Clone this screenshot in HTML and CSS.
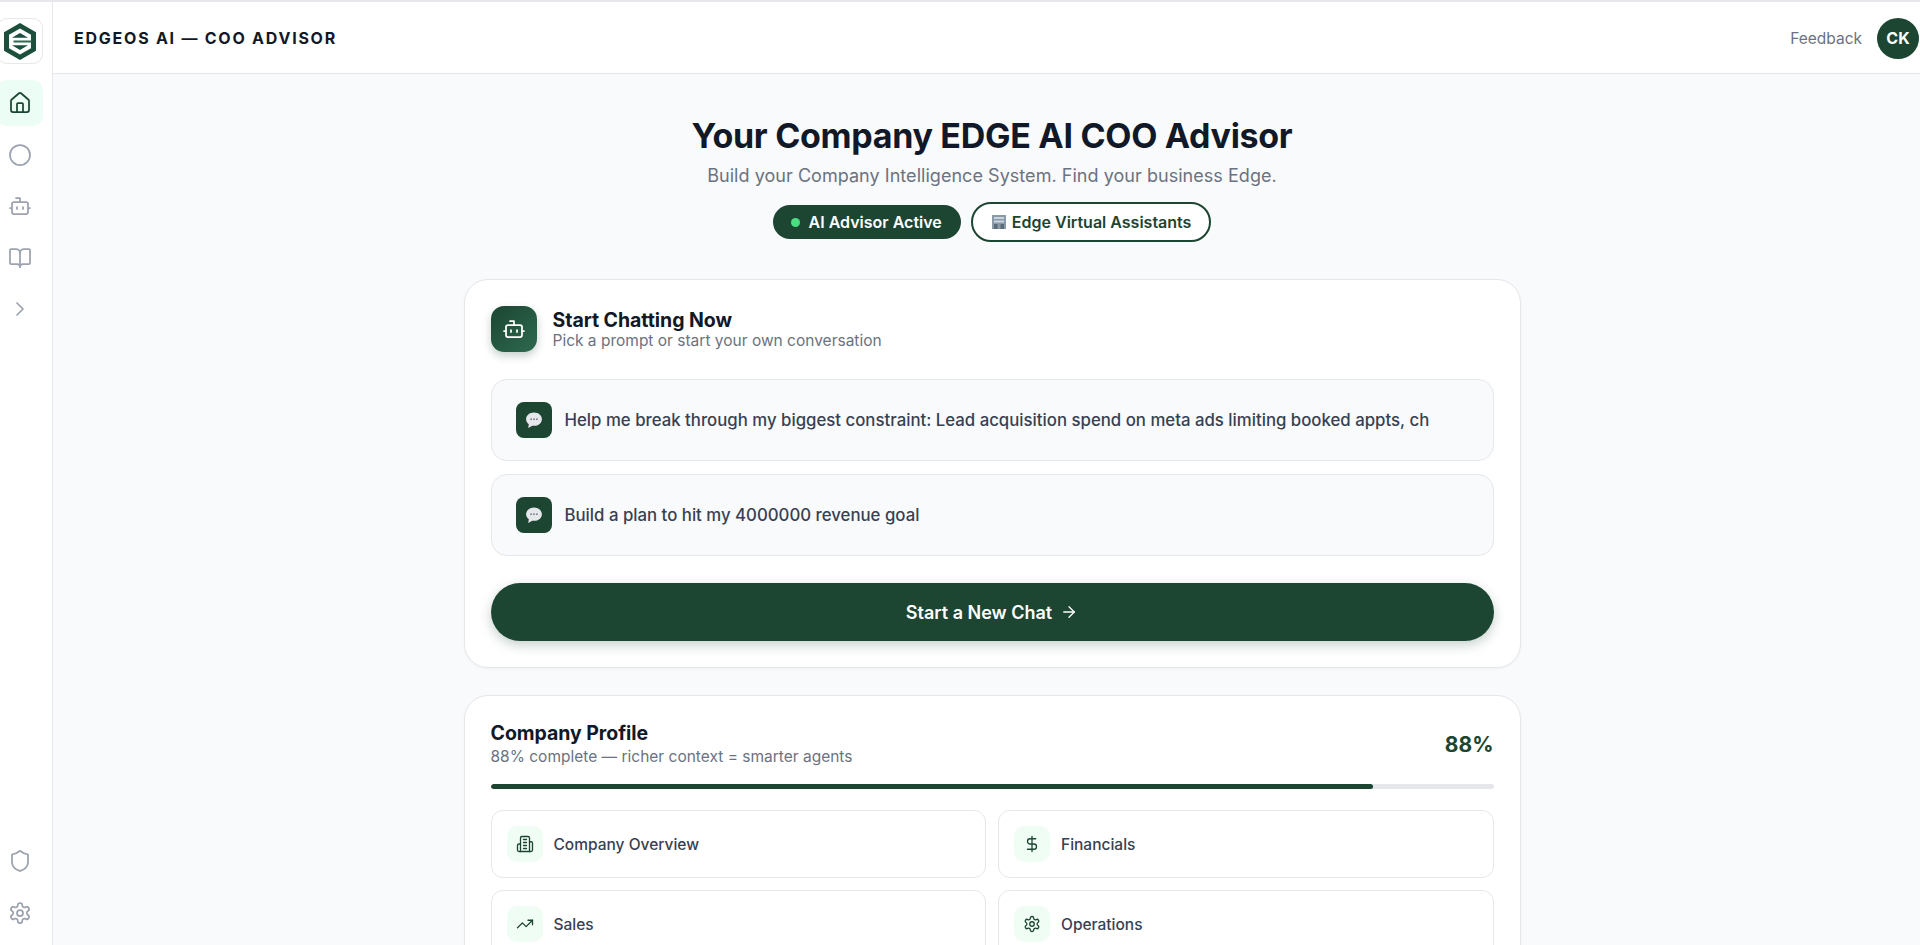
FILE: index.html
```html
<!DOCTYPE html>
<html>

<head>
    <title>EdgeOS AI</title>
    <link rel="stylesheet" href="styles.css">
</head>

<body>
    <svg class="defs" width="0" height="0">
        <symbol id="i-bot" viewBox="0 0 24 24">
            <path d="M12 8V4H8" /><rect width="16" height="12" x="4" y="8" rx="2" /><path d="M2 14h2" /><path d="M20 14h2" /><path d="M15 13v2" /><path d="M9 13v2" />
        </symbol>
        <symbol id="i-gear" viewBox="0 0 24 24">
            <path d="M12.22 2h-.44a2 2 0 0 0-2 2v.18a2 2 0 0 1-1 1.73l-.43.25a2 2 0 0 1-2 0l-.15-.08a2 2 0 0 0-2.73.73l-.22.38a2 2 0 0 0 .73 2.73l.15.1a2 2 0 0 1 1 1.72v.51a2 2 0 0 1-1 1.74l-.15.09a2 2 0 0 0-.73 2.73l.22.38a2 2 0 0 0 2.73.73l.15-.08a2 2 0 0 1 2 0l.43.25a2 2 0 0 1 1 1.73V20a2 2 0 0 0 2 2h.44a2 2 0 0 0 2-2v-.18a2 2 0 0 1 1-1.73l.43-.25a2 2 0 0 1 2 0l.15.08a2 2 0 0 0 2.73-.73l.22-.39a2 2 0 0 0-.73-2.73l-.15-.08a2 2 0 0 1-1-1.74v-.5a2 2 0 0 1 1-1.74l.15-.09a2 2 0 0 0 .73-2.73l-.22-.38a2 2 0 0 0-2.73-.73l-.15.08a2 2 0 0 1-2 0l-.43-.25a2 2 0 0 1-1-1.73V4a2 2 0 0 0-2-2z" /><circle cx="12" cy="12" r="3" />
        </symbol>
        <symbol id="i-bubble" viewBox="0 0 24 24">
            <path class="bubble" d="M12 3C6.600 3 2.500 6.500 2.500 11c0 2.500 1.300 4.600 3.300 6.100L5 21.500l5-2.700c.6.100 1.300.2 2 .2 5.400 0 9.500-3.500 9.500-8S17.400 3 12 3z" />
            <circle class="bubble-dot" cx="8.500" cy="11" r="1" /><circle class="bubble-dot" cx="12" cy="11" r="1" /><circle class="bubble-dot" cx="15.500" cy="11" r="1" />
        </symbol>
    </svg>

    <div class="app">
        <aside class="sidebar">
            <div class="logo">
                <svg viewBox="0 0 32 37" width="32" height="37">
                    <path d="M16 0 32 9.200V27.800L16 37 0 27.800V9.200Z" fill="#1c4f3c" />
                    <path d="M16 5.500 27 11.800V25.200L16 31.500 5 25.200V11.800Z" fill="#fff" />
                    <path d="M16 10 24 14.800H8Z" fill="#1c4f3c" />
                    <path d="M16 27 24 22.200H8Z" fill="#1c4f3c" />
                    <path d="M9.500 17.500H27.500V19.500H9.500Z" fill="#2d6a4f" />
                </svg>
            </div>
            <a class="nav-item active"><svg class="icon" viewBox="0 0 24 24"><path d="M15 21v-8a1 1 0 0 0-1-1h-4a1 1 0 0 0-1 1v8" /><path d="M3 10a2 2 0 0 1 .709-1.528l7-5.999a2 2 0 0 1 2.582 0l7 5.999A2 2 0 0 1 21 10v9a2 2 0 0 1-2 2H5a2 2 0 0 1-2-2z" /></svg></a>
            <a class="nav-item"><svg class="icon" viewBox="0 0 24 24"><circle cx="12" cy="12" r="10" /></svg></a>
            <a class="nav-item"><svg class="icon"><use href="#i-bot" /></svg></a>
            <a class="nav-item"><svg class="icon" viewBox="0 0 24 24"><path d="M12 7v14" /><path d="M3 18a1 1 0 0 1-1-1V4a1 1 0 0 1 1-1h5a4 4 0 0 1 4 4 4 4 0 0 1 4-4h5a1 1 0 0 1 1 1v13a1 1 0 0 1-1 1h-6a3 3 0 0 0-3 3 3 3 0 0 0-3-3z" /></svg></a>
            <a class="nav-item"><svg class="icon" viewBox="0 0 24 24"><path d="m9 18 6-6-6-6" /></svg></a>
            <div class="sidebar-bottom">
                <a class="nav-item"><svg class="icon" viewBox="0 0 24 24"><path d="M20 13c0 5-3.500 7.500-7.660 8.950a1 1 0 0 1-.67-.01C7.500 20.500 4 18 4 13V6a1 1 0 0 1 1-1c2 0 4.500-1.200 6.240-2.720a1.170 1.170 0 0 1 1.520 0C14.510 3.810 17 5 19 5a1 1 0 0 1 1 1z" /></svg></a>
                <a class="nav-item"><svg class="icon"><use href="#i-gear" /></svg></a>
            </div>
        </aside>

        <div class="content">
            <header class="topbar">
                <div class="topbar-title">EDGEOS AI — COO ADVISOR</div>
                <div class="topbar-right">
                    <span class="feedback">Feedback</span>
                    <span class="avatar">CK</span>
                </div>
            </header>

            <main class="main">
                <div class="hero">
                    <h1>Your Company EDGE AI COO Advisor</h1>
                    <p>Build your Company Intelligence System. Find your business Edge.</p>
                    <div class="pills">
                        <span class="pill pill-solid"><i class="dot"></i>AI Advisor Active</span>
                        <span class="pill pill-outline">
                            <svg class="office" viewBox="0 0 16 16" width="16" height="16">
                                <rect x="1" y="1" width="14" height="14" fill="#8a9aa8" />
                                <rect x="3" y="3" width="10" height="2" fill="#c9d6df" />
                                <rect x="3" y="6.500" width="10" height="2" fill="#c9d6df" />
                                <rect x="3" y="10" width="3.500" height="5" fill="#5d6b78" />
                                <rect x="9.500" y="10" width="3.500" height="5" fill="#5d6b78" />
                            </svg>
                            Edge Virtual Assistants
                        </span>
                    </div>
                </div>

                <section class="card">
                    <div class="chat-head">
                        <div class="chat-head-icon"><svg class="icon"><use href="#i-bot" /></svg></div>
                        <div>
                            <h2>Start Chatting Now</h2>
                            <p>Pick a prompt or start your own conversation</p>
                        </div>
                    </div>
                    <div class="prompt">
                        <span class="prompt-icon"><svg><use href="#i-bubble" /></svg></span>
                        <span class="prompt-text">Help me break through my biggest constraint: Lead acquisition spend on meta ads limiting booked appts, ch</span>
                    </div>
                    <div class="prompt">
                        <span class="prompt-icon"><svg><use href="#i-bubble" /></svg></span>
                        <span class="prompt-text">Build a plan to hit my 4000000 revenue goal</span>
                    </div>
                    <button class="new-chat">Start a New Chat
                        <svg class="icon" viewBox="0 0 24 24"><path d="M5 12h14" /><path d="m12 5 7 7-7 7" /></svg>
                    </button>
                </section>

                <section class="card">
                    <div class="profile-head">
                        <div>
                            <h2>Company Profile</h2>
                            <p>88% complete — richer context = smarter agents</p>
                        </div>
                        <span class="percent">88%</span>
                    </div>
                    <div class="progress"><div class="progress-fill" style="width: 88%"></div></div>
                    <div class="profile-grid">
                        <div class="profile-item">
                            <span class="profile-icon"><svg class="icon" viewBox="0 0 24 24"><path d="M6 22V4a2 2 0 0 1 2-2h8a2 2 0 0 1 2 2v18Z" /><path d="M6 12H4a2 2 0 0 0-2 2v6a2 2 0 0 0 2 2h2" /><path d="M18 9h2a2 2 0 0 1 2 2v9a2 2 0 0 1-2 2h-2" /><path d="M10 6h4" /><path d="M10 10h4" /><path d="M10 14h4" /><path d="M10 18h4" /></svg></span>
                            Company Overview
                        </div>
                        <div class="profile-item">
                            <span class="profile-icon"><svg class="icon" viewBox="0 0 24 24"><line x1="12" x2="12" y1="2" y2="22" /><path d="M17 5H9.500a3.500 3.500 0 0 0 0 7h5a3.500 3.500 0 0 1 0 7H6" /></svg></span>
                            Financials
                        </div>
                        <div class="profile-item">
                            <span class="profile-icon"><svg class="icon" viewBox="0 0 24 24"><path d="m22 7-8.500 8.500-5-5L2 17" /><path d="M16 7h6v6" /></svg></span>
                            Sales
                        </div>
                        <div class="profile-item">
                            <span class="profile-icon"><svg class="icon"><use href="#i-gear" /></svg></span>
                            Operations
                        </div>
                    </div>
                </section>
            </main>
        </div>
    </div>
</body>

</html>
```

FILE: styles.css
```css
* {
    box-sizing: border-box;
}

html,
body {
    height: 100%;
    margin: 0;
    overflow: hidden;
}

body {
    font-family: "Inter", "Liberation Sans", sans-serif;
    color: #111827;
    background-color: #ffffff;
    border-top: 2px solid #e5e7eb;
}

.defs {
    position: absolute;
}

.icon {
    width: 24px;
    height: 24px;
    fill: none;
    stroke: currentColor;
    stroke-width: 1.75;
    stroke-linecap: round;
    stroke-linejoin: round;
}

.app {
    display: flex;
    height: 100%;
}

/* 左侧导航 */
.sidebar {
    width: 53px;
    flex-shrink: 0;
    display: flex;
    flex-direction: column;
    padding: 16px 0 0;
    background-color: #ffffff;
    border-right: 1px solid #e5e7eb;
    overflow: hidden;
}

.logo {
    width: 46px;
    height: 46px;
    margin-left: -3px;
    margin-bottom: 16px;
    flex-shrink: 0;
    display: flex;
    align-items: center;
    justify-content: center;
    border: 1px solid #e5e7eb;
    border-radius: 10px;
}

.nav-item {
    width: 46px;
    height: 46px;
    margin-left: -3px;
    margin-bottom: 5.500px;
    flex-shrink: 0;
    display: flex;
    align-items: center;
    justify-content: center;
    border-radius: 10px;
    color: #9ca3af;
}

.nav-item.active {
    background-color: #ecfdf5;
    color: #1c4532;
}

.sidebar-bottom {
    margin-top: auto;
    padding-bottom: 4px;
}

.content {
    flex: 1;
    min-width: 0;
    display: flex;
    flex-direction: column;
}

.topbar {
    height: 72px;
    flex-shrink: 0;
    display: flex;
    align-items: center;
    justify-content: space-between;
    padding: 1px 1px 0 21px;
    background-color: #ffffff;
    border-bottom: 1px solid #e5e7eb;
}

.topbar-title {
    font-size: 16px;
    font-weight: 700;
    letter-spacing: 1.76px;
    color: #111827;
}

.topbar-right {
    display: flex;
    align-items: center;
    gap: 15px;
}

.feedback {
    font-size: 15.500px;
    color: #6b7280;
}

.avatar {
    width: 42px;
    height: 41px;
    border-radius: 50%;
    display: flex;
    align-items: center;
    justify-content: center;
    background-color: #1c4532;
    color: #ffffff;
    font-size: 16px;
    font-weight: 700;
}

/* 主内容 */
.main {
    flex: 1;
    min-height: 0;
    overflow: hidden;
    display: flex;
    flex-direction: column;
    align-items: center;
    padding: 42px 0 0 11px;
    background-color: #f9fafb;
}

.hero {
    text-align: center;
    margin-bottom: 37px;
}

.hero h1 {
    margin: 0;
    font-size: 34px;
    line-height: 40px;
    font-weight: 700;
    letter-spacing: -0.300px;
    color: #111827;
}

.hero p {
    margin: 7px 0 0;
    font-size: 18px;
    line-height: 26px;
    letter-spacing: 0.040px;
    color: #6b7280;
}

.pills {
    display: flex;
    justify-content: center;
    align-items: center;
    gap: 10px;
    margin-top: 13px;
}

.pill {
    display: inline-flex;
    align-items: center;
    border-radius: 999px;
    font-size: 16px;
    font-weight: 600;
}

.pill-solid {
    height: 34px;
    padding: 0 19px 0 18px;
    background-color: #1c4532;
    color: #ffffff;
}

.dot {
    width: 9px;
    height: 9px;
    margin-right: 9px;
    border-radius: 50%;
    background-color: #4ade80;
}

.pill-outline {
    height: 40px;
    padding: 0 18px;
    gap: 5px;
    background-color: #ffffff;
    color: #1c4532;
    border: 2px solid #1c4532;
}

.card {
    width: 1057px;
    flex-shrink: 0;
    margin-bottom: 27px;
    padding: 26px;
    background-color: #ffffff;
    border: 1px solid #e5e7eb;
    border-radius: 24px;
    box-shadow: 0 1px 3px rgba(0, 0, 0, 0.04);
}

.card h2 {
    margin: 0;
    font-size: 19.500px;
    line-height: 24px;
    font-weight: 700;
    letter-spacing: -0.050px;
    color: #111827;
}

.card p {
    margin: 0;
    font-size: 15.500px;
    line-height: 18px;
    color: #6b7280;
}

.chat-head {
    display: flex;
    align-items: center;
    gap: 16px;
    margin-bottom: 27px;
}

.chat-head-icon {
    width: 46px;
    height: 46px;
    display: flex;
    align-items: center;
    justify-content: center;
    border-radius: 13px;
    background: linear-gradient(135deg, #1c4532, #2d6a4f);
    box-shadow: 0 4px 8px rgba(28, 69, 50, 0.25);
    color: #ffffff;
}

.prompt {
    height: 82px;
    display: flex;
    align-items: center;
    gap: 13px;
    margin-bottom: 13px;
    padding: 0 24px;
    background-color: #f9fafb;
    border: 1px solid #e5e7eb;
    border-radius: 16px;
}

.prompt-icon {
    width: 36px;
    height: 36px;
    flex-shrink: 0;
    display: flex;
    align-items: center;
    justify-content: center;
    background-color: #1c4532;
    border-radius: 8px;
}

.prompt-icon svg {
    width: 20px;
    height: 20px;
}

.bubble {
    fill: #e5e7eb;
}

.bubble-dot {
    fill: #6b7280;
}

.prompt-text {
    font-size: 16.800px;
    font-weight: 500;
    color: #374151;
    white-space: nowrap;
    overflow: hidden;
}

.new-chat {
    width: 100%;
    height: 58px;
    margin-top: 27px;
    display: flex;
    align-items: center;
    justify-content: center;
    gap: 8px;
    border: none;
    border-radius: 29px;
    background-color: #1c4532;
    color: #ffffff;
    font-family: inherit;
    font-size: 18px;
    font-weight: 600;
    box-shadow: 0 4px 12px rgba(28, 69, 50, 0.25);
}

.new-chat .icon {
    width: 18px;
    height: 18px;
}

.profile-head {
    display: flex;
    align-items: center;
    justify-content: space-between;
    margin-bottom: 18px;
}

.profile-head h2 {
    margin-top: -1px;
    margin-bottom: 3px;
}

.percent {
    font-size: 21px;
    font-weight: 700;
    color: #1c4532;
}

.progress {
    height: 5px;
    border-radius: 3px;
    background-color: #e5e7eb;
    overflow: hidden;
}

.progress-fill {
    height: 100%;
    border-radius: 3px;
    background-color: #1c4532;
}

.profile-grid {
    display: grid;
    grid-template-columns: 1fr 1fr;
    gap: 12px;
    margin-top: 21px;
}

.profile-item {
    display: flex;
    align-items: center;
    gap: 11px;
    padding: 15px;
    border: 1px solid #e5e7eb;
    border-radius: 12px;
    font-size: 15.500px;
    font-weight: 500;
    color: #374151;
}

.profile-icon {
    width: 36px;
    height: 36px;
    display: flex;
    align-items: center;
    justify-content: center;
    background-color: #f0fdf4;
    border-radius: 10px;
    color: #1c4532;
}

.profile-icon .icon {
    width: 18px;
    height: 18px;
}
```
